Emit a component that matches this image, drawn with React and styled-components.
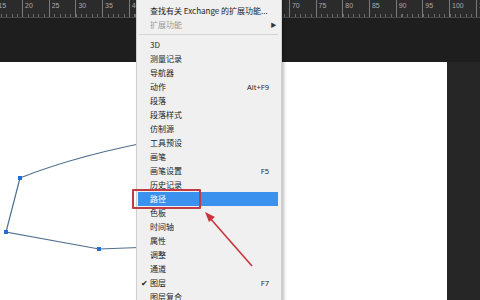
import * as React from 'react';
import styled, { createGlobalStyle } from 'styled-components';

const GlobalStyle = createGlobalStyle`
  html, body {
    margin: 0;
    padding: 0;
    width: 480px;
    height: 300px;
    overflow: hidden;
    background: #1e1e1e;
  }
`;

const Screen = styled.div`
  position: relative;
  width: 480px;
  height: 300px;
  display: grid;
  grid-template-rows: 18px 44px 1fr;
  overflow: hidden;
  font-family: "Noto Sans CJK SC", "Noto Sans", sans-serif;
`;

const Ruler = styled.div`
  overflow: hidden;
  background-color: #2b2b2b;
  border-bottom: 1px solid #4a4a4a;
  background-image: repeating-linear-gradient(
    to right,
    #6a6a6a 0,
    #6a6a6a 1px,
    transparent 1px,
    transparent 5.34px
  );
  background-size: 100% 3px;
  background-repeat: no-repeat;
  background-position: 1px 100%;
`;

const RulerTrack = styled.div`
  display: flex;
  height: 100%;
  margin-left: -4.7px;
`;

const RulerCell = styled.div`
  flex: 0 0 26.7px;
  box-sizing: border-box;
  border-left: 1px solid #7a7a7a;
  padding: 2px 0 0 2px;
  font-family: "Liberation Sans", sans-serif;
  font-size: 7px;
  line-height: 8px;
  color: #a8a8a8;
`;

const DarkBand = styled.div`
  background: #1e1e1e;
`;

const Workspace = styled.div`
  display: flex;
`;

const Canvas = styled.div`
  position: relative;
  flex: 0 0 447px;
  background: #ffffff;
`;

const SidePanel = styled.div`
  flex: 1;
  background: #262626;
`;

const Overlay = styled.svg`
  position: absolute;
  left: 0;
  top: 0;
  pointer-events: none;
`;

const Menu = styled.div`
  position: absolute;
  left: 136px;
  top: -4px;
  width: 146px;
  box-sizing: border-box;
  padding: 7px 3px 0 1px;
  background: #f0f0f0;
  border: 1px solid #cfcfcf;
  box-shadow: 2px 2px 3px rgba(0, 0, 0, 0.25);
  font-size: 8px;
`;

const Item = styled.div`
  display: grid;
  grid-template-columns: 12px 1fr auto 9px;
  align-items: center;
  height: 14px;
  line-height: 14px;
  white-space: nowrap;
  color: ${p => (p.$active ? '#ffffff' : p.$disabled ? '#9a9a9a' : '#1c1c1c')};
  background: ${p => (p.$active ? '#3a92ee' : 'transparent')};
`;

const Check = styled.span`
  text-align: center;
  font-size: 8px;
  color: #222;
`;

const Shortcut = styled.span`
  font-family: "Noto Sans", sans-serif;
  font-size: 7.5px;
`;

const SubArrow = styled.span`
  font-size: 6px;
  text-align: center;
  color: #333;
`;

const Separator = styled.div`
  height: 1px;
  margin: 2px 0 3px 1px;
  background: #d4d4d4;
`;

const HighlightBox = styled.div`
  position: absolute;
  left: 132px;
  top: 189px;
  width: 69px;
  height: 20px;
  box-sizing: border-box;
  border: 2px solid #c23a44;
  border-radius: 1px;
  pointer-events: none;
`;

const rulerLabels = [15, 20, 25, 30, 35, 40, 45, 50, 55, 60, 65, 70, 75, 80, 85, 90, 95, 100, 105];

const items = [
  { label: '3D' },
  { label: '测量记录' },
  { label: '导航器' },
  { label: '动作', shortcut: 'Alt+F9' },
  { label: '段落' },
  { label: '段落样式' },
  { label: '仿制源' },
  { label: '工具预设' },
  { label: '画笔' },
  { label: '画笔设置', shortcut: 'F5' },
  { label: '历史记录' },
  { label: '路径', active: true },
  { label: '色板' },
  { label: '时间轴' },
  { label: '属性' },
  { label: '调整' },
  { label: '通道' },
  { label: '图层', shortcut: 'F7', checked: true },
  { label: '图层复合' },
];

function PathDrawing() {
  const anchors = [
    [20, 116],
    [6, 170],
    [99, 187],
  ];
  return (
    <Overlay width="447" height="238" viewBox="0 0 447 238">
      <path
        d="M20 116 Q 80 92 170 76 M20 116 L6 170 L99 187 L180 184"
        fill="none"
        stroke="#4f6f8f"
        strokeWidth="1.2"
      />
      {anchors.map(([x, y]) => (
        <rect key={`${x}-${y}`} x={x - 2} y={y - 2} width="4" height="4" fill="#1f6fd6" />
      ))}
    </Overlay>
  );
}

function App() {
  return (
    <>
      <GlobalStyle />
      <Screen>
        <Ruler>
          <RulerTrack>
            {rulerLabels.map(n => (
              <RulerCell key={n}>{n}</RulerCell>
            ))}
          </RulerTrack>
        </Ruler>
        <DarkBand />
        <Workspace>
          <Canvas>
            <PathDrawing />
          </Canvas>
          <SidePanel />
        </Workspace>

        <Menu>
          <Item>
            <span />
            <span>查找有关 Exchange 的扩展功能...</span>
            <span />
            <span />
          </Item>
          <Item $disabled>
            <span />
            <span>扩展功能</span>
            <span />
            <SubArrow>▶</SubArrow>
          </Item>
          <Separator />
          {items.map(item => (
            <Item key={item.label} $active={item.active}>
              <Check>{item.checked ? '✔' : ''}</Check>
              <span>{item.label}</span>
              <Shortcut>{item.shortcut || ''}</Shortcut>
              <span />
            </Item>
          ))}
        </Menu>

        <HighlightBox />
        <Overlay width="480" height="300" viewBox="0 0 480 300">
          <line x1="252" y1="266" x2="209" y2="217" stroke="#c8353d" strokeWidth="1.6" />
          <polygon points="205,212 215,217 209,222" fill="#c8353d" />
        </Overlay>
      </Screen>
    </>
  );
}

export default App;
